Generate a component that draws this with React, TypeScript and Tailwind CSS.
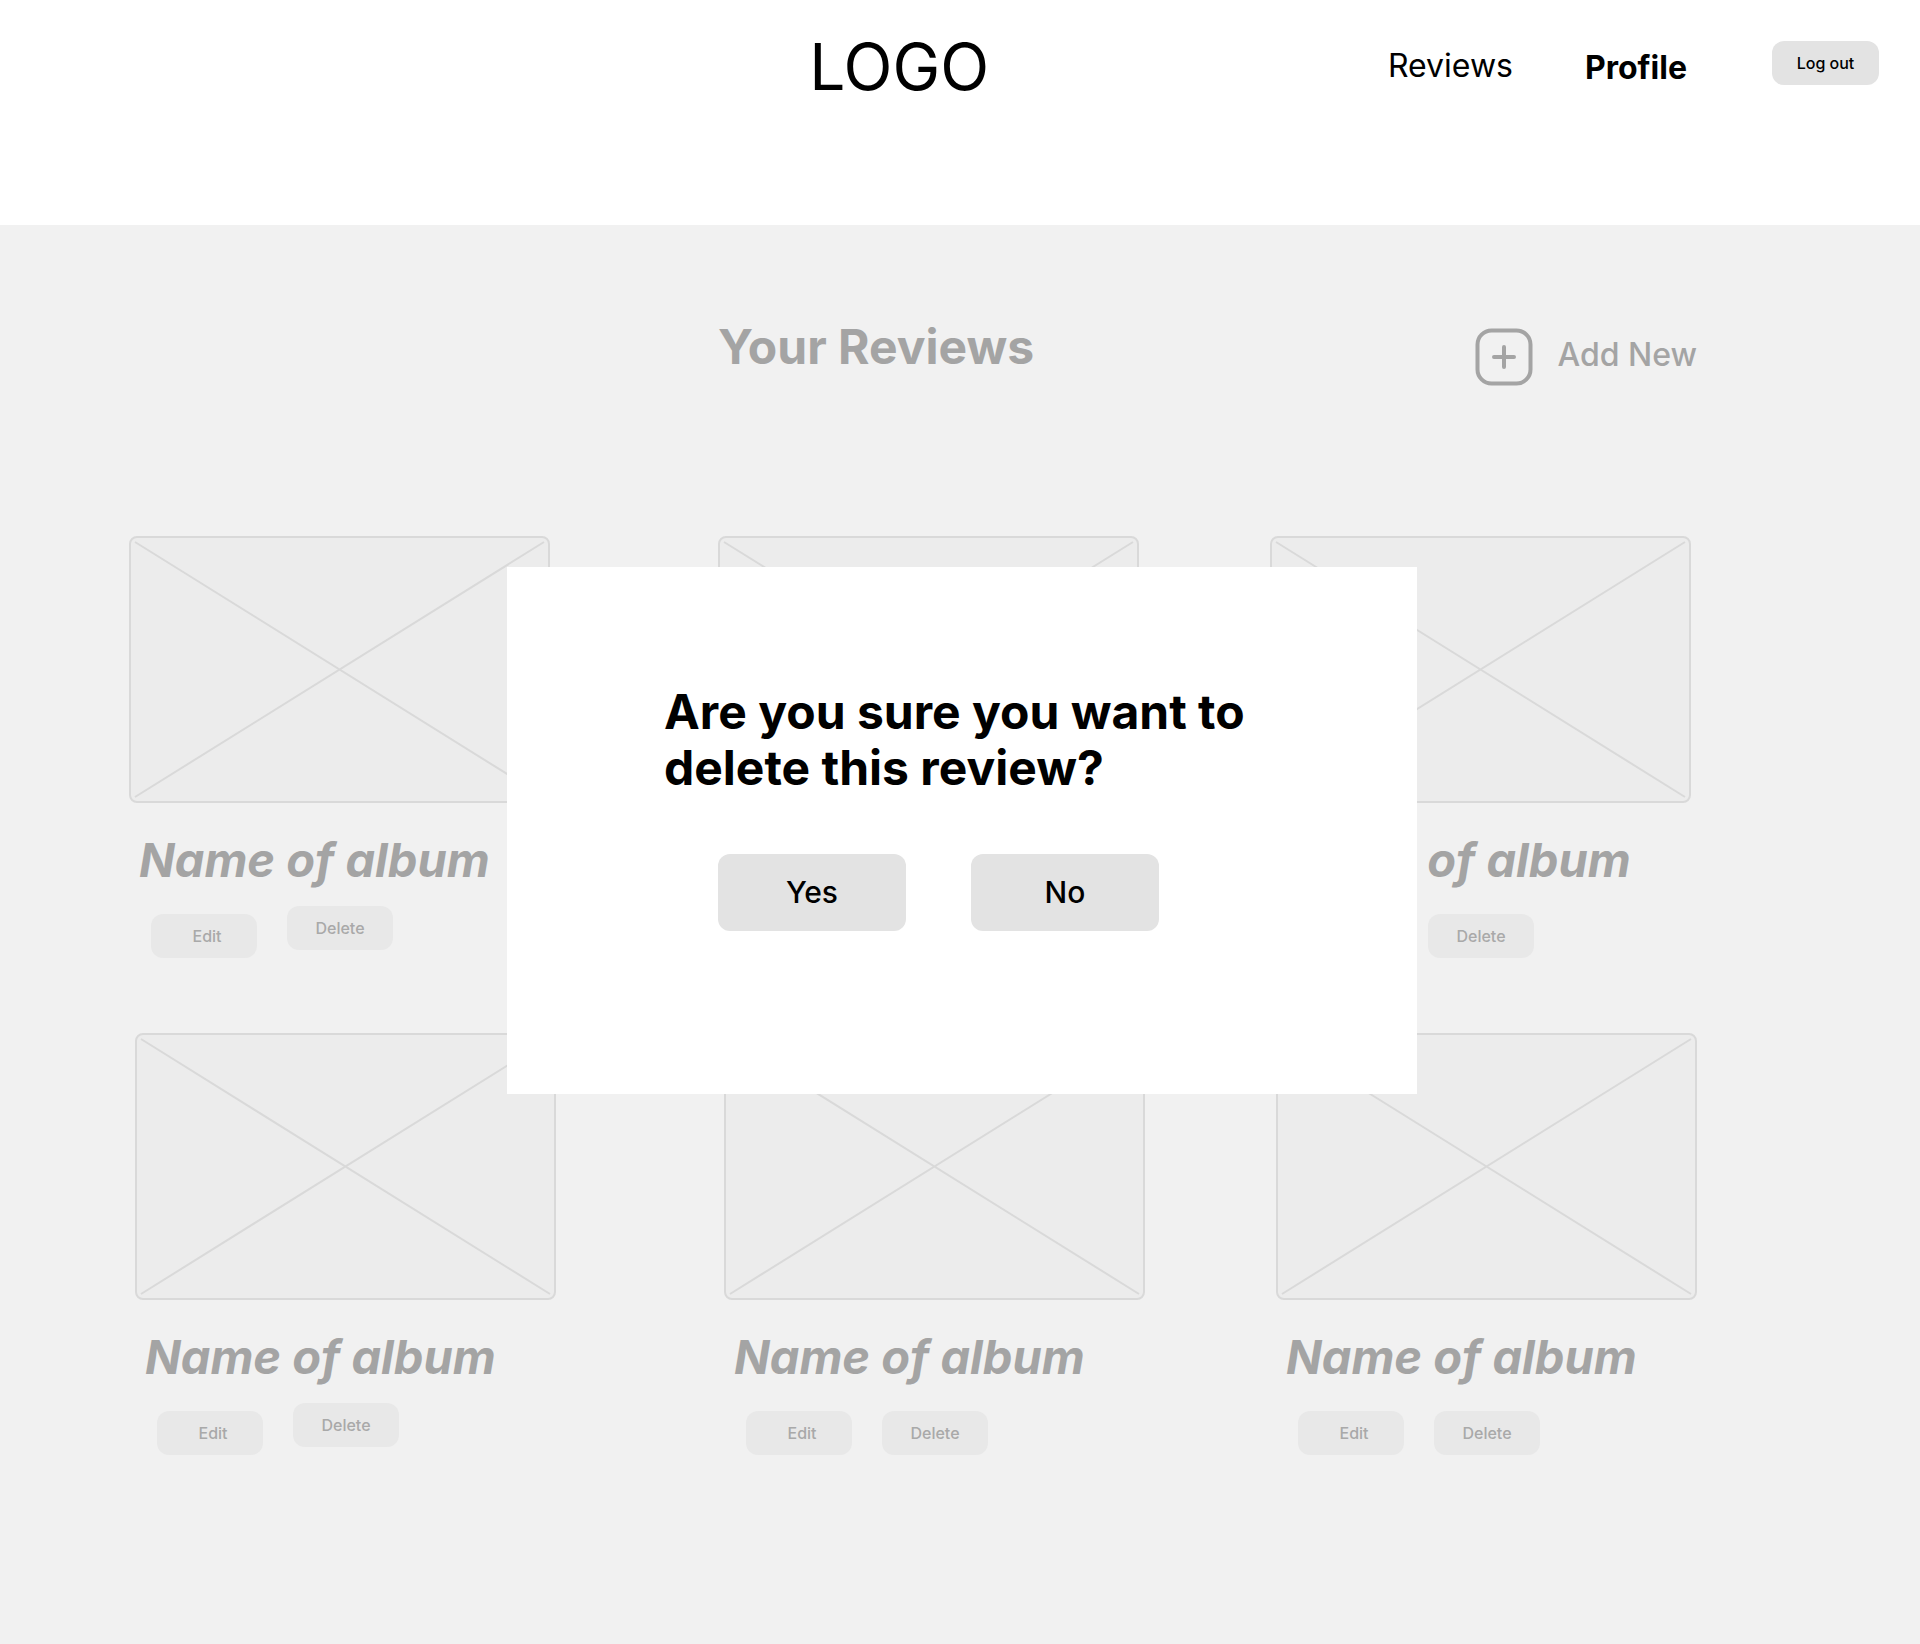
import React from "react";

const GRID = "grid grid-cols-[589fr_552fr_427fr]";

function AddIcon() {
  return (
    <svg viewBox="0 0 58 58" className="size-[58px] shrink-0" fill="none" stroke="currentColor" strokeWidth="4" strokeLinecap="round" aria-hidden="true">
      <rect x="2.5" y="2.5" width="53" height="53" rx="14" />
      <path d="M29 19v20M19 29h20" />
    </svg>
  );
}

function ImagePlaceholder() {
  return (
    <svg viewBox="0 0 421 267" className="block w-full" role="img" aria-label="Album cover">
      <rect x="1" y="1" width="419" height="265" rx="7" fill="#ececec" stroke="#d9d9d9" strokeWidth="2" />
      <path d="M6 6L415 261M415 6L6 261" stroke="#d9d9d9" strokeWidth="2" />
    </svg>
  );
}

const smallButton = "h-11 w-[106px] rounded-xl bg-[#e8e8e8] text-center text-base font-medium text-[#a9a9a9]";

function ReviewCard({ raised, inset }: { raised: boolean; inset: boolean }) {
  return (
    <article className={inset ? "pl-1.5" : ""}>
      <div className="w-full max-w-[421px]">
        <ImagePlaceholder />
        <h2 className="mt-[27px] pl-2.5 text-[47px] leading-[60px] font-bold whitespace-nowrap text-[#a4a4a4] italic">Name of album</h2>
        <div className="mt-4 flex items-start gap-[30px] pl-[22px]">
          <button type="button" className={`${smallButton} mt-2 pl-[6px]`}>Edit</button>
          <button type="button" className={`${smallButton} ${raised ? "mt-0" : "mt-2"}`}>Delete</button>
        </div>
      </div>
    </article>
  );
}

export default function App() {
  return (
    <div className="min-h-screen bg-[#f1f1f1] font-['Inter',sans-serif] text-black">
      <header className="grid grid-cols-[42%_1fr_auto] items-start bg-white pt-7 pr-[41px] pb-[119px]">
        <a href="#home" className="col-start-2 pl-5 text-[64px] leading-[78px]">LOGO</a>
        <nav className="flex items-start">
          <a href="#reviews" className="pt-[18px] text-[32px] leading-10">Reviews</a>
          <a href="#profile" className="ml-[72px] pt-5 text-[32px] leading-10 font-bold">Profile</a>
          <button type="button" className="mt-[13px] ml-[85px] h-11 w-[107px] rounded-xl bg-[#e3e3e3] text-base font-medium">Log out</button>
        </nav>
      </header>

      <main className="relative pt-[92px] pr-[223px] pb-[186px] pl-[129px]">
        <div className={`${GRID} items-start`}>
          <h1 className="col-start-2 text-[48px] leading-[60px] font-bold whitespace-nowrap text-[#a4a4a4]">Your Reviews</h1>
          <button type="button" className="mt-[11px] flex items-center gap-6 justify-self-end text-[32px] leading-10 font-medium whitespace-nowrap text-[#a4a4a4]">
            <AddIcon />
            <span className="pb-1">Add New</span>
          </button>
        </div>

        <section className="mt-[150px] space-y-[75px]" aria-label="Reviews">
          {[0, 1].map((row) => (
            <div key={row} className={GRID}>
              {[0, 1, 2].map((col) => (
                <ReviewCard key={col} raised={col === 0} inset={row === 1} />
              ))}
            </div>
          ))}
        </section>

        <div className="absolute inset-x-0 top-[342px] flex justify-center pl-1">
          <div role="dialog" aria-modal="true" aria-labelledby="confirm-title" className="w-full max-w-[910px] bg-white pt-[117px] pb-[163px]">
            <h2 id="confirm-title" className="pr-[100px] pl-[157px] text-[48px] leading-[56px] font-bold">
              Are you sure you want to<br />delete this review?
            </h2>
            <div className="mt-[58px] flex gap-[65px] pl-[211px]">
              <button type="button" className="h-[77px] w-[188px] rounded-xl bg-[#e3e3e3] text-[30px] font-medium">Yes</button>
              <button type="button" className="h-[77px] w-[188px] rounded-xl bg-[#e3e3e3] text-[30px] font-medium">No</button>
            </div>
          </div>
        </div>
      </main>
    </div>
  );
}
